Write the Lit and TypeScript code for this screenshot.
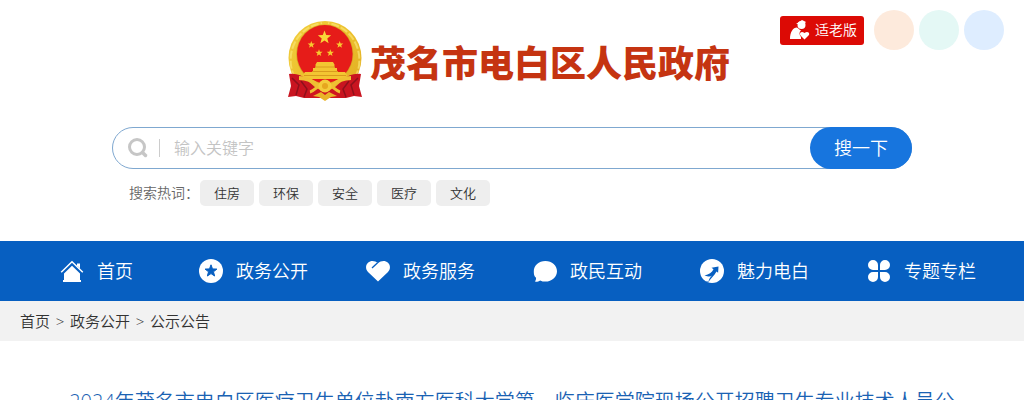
import { LitElement, html, css, svg } from "lit";
import { customElement } from "lit/decorators.js";

const star = (cx: number, cy: number, r: number) => {
  const pts: string[] = [];
  for (let i = 0; i < 10; i++) {
    const a = (Math.PI / 5) * i - Math.PI / 2;
    const d = i % 2 ? r * 0.42 : r;
    pts.push(`${(cx + d * Math.cos(a)).toFixed(2)},${(cy + d * Math.sin(a)).toFixed(2)}`);
  }
  return pts.join(" ");
};

const icons = {
  home: svg`<path fill="#fff" d="M12 6.800 4 14.600V21H3v2h18v-2h-1v-6.400z"/>
    <path d="M1.200 13.200 12 2.800l10.800 10.400" fill="none" stroke="#fff" stroke-width="1.500"/>
    <path fill="#fff" d="M17 4.500h3V9.500l-3-3z"/>`,
  star: svg`<circle cx="12" cy="12" r="12" fill="#fff"/>
    <polygon points="${star(12, 12, 6.2)}" fill="#075fc1" stroke="#075fc1" stroke-linejoin="round"/>`,
  heart: svg`<path fill="#fff" d="M12 22.600 2 13C-.8 10-.4 6 2 3.800 4.800 1.200 9 1.600 12 4.200c3-2.600 7.200-3 10-.4 2.400 2.200 2.800 6.200 0 9.200z"/>
    <path d="M6 9 11.600 3.800" stroke="#075fc1" stroke-width="1.300"/>`,
  chat: svg`<path fill="#fff" d="M12.400 2C19 2 24 6.600 24 12.200s-5 10.400-11.600 10.400c-2 0-3.600-.4-5.200-1.200-1.400 1-3.200 1.400-5.400 1.200 1-1.200 1.400-2.400 1.200-3.800C1 17.200.8 15 .8 12.200.8 6.600 5.800 2 12.400 2z"/>`,
  rise: svg`<circle cx="12" cy="12" r="12" fill="#fff"/>
    <path fill="#075fc1" d="m18.500 7.500-7 1.200 2 1.500c-1.600 3.200-4.400 5.200-9 6.400 1.800.8 3.600 1 5.600.6-1.600 1.600-3 3.600-3.800 5.800l1.800.8c1.800-4 6.400-7 8.400-11.400l1.600 1.400z"/>
    <path fill="#fff" d="M5 18c3 .4 5-.2 7-1.600-2 2-3.200 4-3.600 6.600L5 21z"/>`,
  clover: svg`<path fill="#fff" d="M11 11H6a5 5 0 1 1 5-5zM13 11V6a5 5 0 1 1 5 5zM11 13v5a5 5 0 1 1-5-5zM13 13h5a5 5 0 1 1-5 5z"/>`,
};

const navItems = [
  { label: "首页", icon: icons.home },
  { label: "政务公开", icon: icons.star },
  { label: "政务服务", icon: icons.heart },
  { label: "政民互动", icon: icons.chat },
  { label: "魅力电白", icon: icons.rise },
  { label: "专题专栏", icon: icons.clover },
];

const hotWords = ["住房", "环保", "安全", "医疗", "文化"];
const trail = ["首页", "政务公开", "公示公告"];

const emblem = html`<svg class="emblem" viewBox="0 0 74 80" aria-hidden="true">
  <defs>
    <linearGradient id="gold" x1="0" y1="0" x2="1" y2="1">
      <stop offset="0" stop-color="#f2cf3f" />
      <stop offset=".5" stop-color="#ecc02c" />
      <stop offset="1" stop-color="#e0ab22" />
    </linearGradient>
  </defs>
  <ellipse cx="37" cy="37" rx="36.500" ry="37" fill="url(#gold)" />
  <path fill="none" stroke="#f9e474" stroke-width="2" stroke-dasharray="8 2" opacity=".7" d="M7 57C-4 36 6 7 34 2M67 57C78 36 68 7 40 2" />
  <ellipse cx="36.800" cy="33" rx="28.600" ry="29.600" fill="#d9a423" />
  <ellipse cx="36.800" cy="33" rx="27.800" ry="29" fill="#e61c19" />
  <polygon points="${star(36.5, 16.5, 7)}" fill="#f9d638" />
  <polygon points="${star(23.3, 23.7, 3.8)}" fill="#f7c92f" />
  <polygon points="${star(51.7, 23.7, 3.8)}" fill="#f7c92f" />
  <polygon points="${star(31, 32, 3.8)}" fill="#f7c92f" />
  <polygon points="${star(42.3, 32, 3.8)}" fill="#f7c92f" />
  <path fill="#f3c532" d="M29 41h16l2 3.500h-1l1 2.500h2v4h8l2 3-3 4H18l-3-4 2-3h8v-4h2l1-2.500h-1z" />
  <path fill="none" stroke="#d99b1d" d="M27 46h20M24 50.500h26M16 54.500h42" />
  <path fill="#c91420" d="M1 53c7-1 13 1 18 6l10 9-1 9H16l-8-2-8 1 3-11zM73 53c-7-1-13 1-18 6l-10 9 1 9h12l8-2 8 1-3-11z" />
  <path fill="none" stroke="#8e101b" stroke-width="1.500" d="m4 57 7 7-3 10M13 60l6 8-3 8M70 57l-7 7 3 10M61 60l-6 8 3 8" />
  <path fill="#cf1520" d="M24 66h26l2 11H22z" />
  <path fill="none" stroke="#efc033" stroke-width="4" d="M11 57c10 0 15 4 19 8s10 4 14 0 9-8 19-8" />
  <path fill="none" stroke="#efc033" stroke-width="3" d="M22 71c5-1 8-8 15-8s10 7 15 8" />
  <circle cx="37" cy="65" r="6.500" fill="#f4cc3b" />
  <circle cx="37" cy="65" r="3" fill="#e6a71f" />
  <path fill="#e9b429" d="m25 75 8-4 4 3 4-3 8 4-6 1-6 4-6-4z" />
</svg>`;

@customElement("app-root")
export class AppRoot extends LitElement {
  static styles = css`
    :host {
      display: block;
      font-family: "Open Sans", "Noto Sans CJK SC", sans-serif;
      font-weight: 350;
      color: #333;
      background: #fff;
    }
    a { color: inherit; text-decoration: none; }
    .top { position: relative; padding-top: 21px; }
    .tools {
      position: absolute;
      top: 10px;
      right: 20px;
      display: flex;
      align-items: center;
      gap: 5px;
    }
    .elder {
      display: flex;
      align-items: center;
      gap: 5px;
      box-sizing: border-box;
      height: 29px;
      margin-right: 5px;
      padding: 0 7px 0 9px;
      border-radius: 3px;
      background: #dc0a05;
      color: #fff;
      font-size: 14px;
      line-height: 28px;
    }
    .elder svg { width: 21px; height: 20px; }
    .dot { width: 40px; height: 40px; border-radius: 50%; }
    .peach { background: #fdeadc; }
    .mint { background: #e4f8f5; }
    .sky { background: #deedff; }
    .brand {
      display: flex;
      justify-content: center;
      gap: 8px;
      padding-right: 6px;
    }
    .emblem { width: 74px; height: 80px; }
    .site {
      margin: 0;
      color: #c53411;
      font-size: 36px;
      line-height: 86px;
      font-weight: 900;
    }
    .search {
      display: flex;
      box-sizing: border-box;
      max-width: 800px;
      height: 42px;
      margin: 20px auto 0;
      border: 1px solid #7fa8d0;
      border-radius: 21px;
    }
    .field { flex: 1; display: flex; align-items: center; padding-left: 14px; }
    .glass { width: 22px; height: 22px; }
    .rule { width: 1px; height: 18px; margin: 0 14px 0 10px; background: #ccc; }
    .query {
      flex: 1;
      min-width: 0;
      padding: 0;
      border: 0;
      outline: 0;
      background: none;
      font: inherit;
      font-size: 16px;
      line-height: 24px;
    }
    .query::placeholder { color: #c4c4c4; opacity: 1; }
    .go {
      width: 102px;
      margin: -1px;
      padding: 0;
      border: 0;
      border-radius: 21px;
      background: #1775de;
      color: #fff;
      font: inherit;
      font-size: 18px;
      line-height: 42px;
    }
    .hot {
      display: flex;
      gap: 1px;
      max-width: 766px;
      margin: 11px auto 35px;
      font-size: 14px;
      line-height: 26px;
      color: #666;
    }
    .words { display: flex; gap: 5px; }
    .word {
      padding: 0 14px;
      border-radius: 5px;
      background: #eee;
      color: #333;
      font-size: 13px;
    }
    .nav { background: #075fc1; }
    .menu {
      display: grid;
      grid-template-columns: 139fr repeat(4, 167fr) auto;
      margin: 0;
      padding: 0 48px 0 60px;
      list-style: none;
    }
    .entry {
      display: flex;
      align-items: center;
      gap: 13px;
      color: #fff;
      font-size: 18px;
      line-height: 60px;
      white-space: nowrap;
    }
    .entry svg { width: 24px; height: 24px; }
    .crumbs {
      display: flex;
      gap: 5px;
      padding: 0 20px;
      background: #f2f2f2;
      font-size: 15px;
      line-height: 40px;
    }
    .sep { min-width: 10px; text-align: center; }
    .headline {
      max-width: 900px;
      margin: 0 auto;
      padding-top: 46px;
      color: #1a62b3;
      font-size: 20px;
      line-height: 30px;
      font-weight: inherit;
      text-align: center;
    }
  `;

  render() {
    return html`
      <header class="top">
        <div class="tools">
          <a class="elder" href="#">
            <svg viewBox="0 0 21 20" aria-hidden="true">
              <circle cx="12.500" cy="5" r="4" fill="#fff" />
              <path fill="#fff" d="M7 4 13 0l4 2-2 2zM1 19C1 12 4 7.500 8 7.500c2 1.500 3 2.500 4 3-2 1.500-2 4 0 6.500V19z" />
              <path fill="#fff" d="m15.500 19.500-4-4c-1.500-2 .5-5 4-2.500 3.500-2.500 6 .5 4 2.500z" />
            </svg>
            <span>适老版</span>
          </a>
          <span class="dot peach"></span>
          <span class="dot mint"></span>
          <span class="dot sky"></span>
        </div>
        <div class="brand">
          ${emblem}
          <h1 class="site">茂名市电白区人民政府</h1>
        </div>
        <form class="search" role="search">
          <div class="field">
            <svg class="glass" viewBox="0 0 22 22" aria-hidden="true">
              <circle cx="10" cy="10" r="7.500" fill="none" stroke="#c6c6c6" stroke-width="3" />
              <path d="m15.500 15.500 3 3" stroke="#c6c6c6" stroke-width="3.500" stroke-linecap="round" />
            </svg>
            <span class="rule"></span>
            <input class="query" type="text" placeholder="输入关键字" aria-label="输入关键字" />
          </div>
          <button class="go" type="button">搜一下</button>
        </form>
        <div class="hot">
          <span>搜索热词：</span>
          <div class="words">${hotWords.map((w) => html`<a class="word" href="#">${w}</a>`)}</div>
        </div>
      </header>
      <nav class="nav">
        <ul class="menu">
          ${navItems.map(
            (n) => html`<li>
              <a class="entry" href="#"><svg viewBox="0 0 24 24" aria-hidden="true">${n.icon}</svg><span>${n.label}</span></a>
            </li>`
          )}
        </ul>
      </nav>
      <div class="crumbs">
        ${trail.map((t, i) => html`${i ? html`<span class="sep">&gt;</span>` : ""}<a href="#">${t}</a>`)}
      </div>
      <main>
        <h2 class="headline">2024年茂名市电白区医疗卫生单位赴南方医科大学第一临床医学院现场公开招聘卫生专业技术人员公告</h2>
      </main>
    `;
  }
}
